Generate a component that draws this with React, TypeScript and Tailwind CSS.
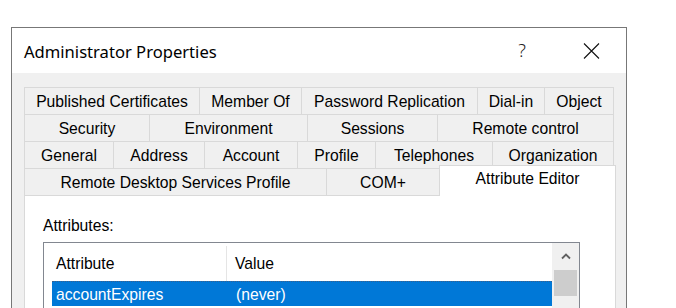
import React from "react";

const tabRows = [
  [
    { label: "Published Certificates", w: "w-[175px]" },
    { label: "Member Of", w: "w-[102px]" },
    { label: "Password Replication", w: "w-[176px]" },
    { label: "Dial-in", w: "w-[67px]" },
    { label: "Object", w: "w-[70px]" },
  ],
  [
    { label: "Security", w: "w-[125px]" },
    { label: "Environment", w: "w-[158px]" },
    { label: "Sessions", w: "w-[130px]" },
    { label: "Remote control", w: "w-[177px]" },
  ],
  [
    { label: "General", w: "w-[89px]" },
    { label: "Address", w: "w-[91px]" },
    { label: "Account", w: "w-[93px]" },
    { label: "Profile", w: "w-[78px]" },
    { label: "Telephones", w: "w-[117px]" },
    { label: "Organization", w: "w-[122px]" },
  ],
];

const font = { fontFamily: '"Liberation Sans", Arial, sans-serif' };

export default function App() {
  return (
    <div className="h-[308px] w-[676px] overflow-hidden bg-white pl-[11px] pt-[27px]" style={font}>
      <div className="w-[616px] border border-b-0 border-[#777777]">
        {/* Title bar */}
        <div className="flex h-[45px] items-center bg-white pl-[12px] pt-[3px] text-black">
          <span className="text-[16.6px]" style={{ fontFamily: '"Noto Sans", "Open Sans", sans-serif' }}>
            Administrator Properties
          </span>
          <span
            className="ml-auto mr-[57px] -mt-[3px] text-[18px] font-light text-[#222]"
            style={{ fontFamily: '"Noto Sans", sans-serif' }}
          >
            ?
          </span>
          <svg className="mr-[26px] -mt-[3px]" width="17" height="16" viewBox="0 0 17 16">
            <path d="M1 0.5 L16 15.5 M16 0.5 L1 15.5" stroke="#111" strokeWidth="1.1" fill="none" />
          </svg>
        </div>

        {/* Body */}
        <div className="bg-[#f0f0f0] pl-[12px] pt-[14px] pb-[40px]">
          <div className="w-[592px] text-[15.7px] text-black">
            {tabRows.map((row, i) => (
              <div key={i} className="flex h-[27px]">
                {row.map((t, j) => (
                  <div
                    key={t.label}
                    className={`${t.w} flex items-center justify-center border-l border-t border-[#d9d9d9] bg-[#f0f0f0] pt-px ${
                      j === row.length - 1 ? "border-r" : ""
                    }`}
                  >
                    {t.label}
                  </div>
                ))}
              </div>
            ))}
            <div className="flex h-[27px] items-end">
              <div className="flex h-[27px] w-[302px] items-center justify-center border-l border-t border-[#d9d9d9] pt-px">
                Remote Desktop Services Profile
              </div>
              <div className="flex h-[27px] w-[113px] items-center justify-center border-l border-t border-[#d9d9d9] pt-px">
                COM+
              </div>
              <div className="relative z-10 -mb-px flex h-[31px] w-[177px] items-center justify-center border-l border-r border-t border-[#d9d9d9] bg-white pb-[4px]">
                Attribute Editor
              </div>
            </div>

            {/* Panel */}
            <div className="h-[200px] w-[592px] border border-[#d9d9d9] bg-white pl-[18px] pt-[21px]">
              <div className="leading-[18px]">Attributes:</div>
              <div className="mt-[7px] flex h-[160px] w-[537px] border border-[#828790] bg-white">
                <div className="w-[508px]">
                  <div className="flex h-[38px] items-center pt-[3px]">
                    <div className="flex h-[35px] w-[183px] items-center border-r border-[#e5e5e5] pl-[12px]">
                      Attribute
                    </div>
                    <div className="pl-[8px]">Value</div>
                  </div>
                  <div className="ml-[8px] flex h-[25px] w-[500px] items-center border-t border-dotted border-[#3a5f8a] bg-[#0078d7] pt-[2px] text-white">
                    <div className="w-[184px] pl-[4px]">accountExpires</div>
                    <div>(never)</div>
                  </div>
                </div>
                <div className="flex w-[27px] flex-col items-center bg-[#f0f0f0]">
                  <div className="flex h-[27px] w-full items-center justify-center">
                    <svg width="10" height="7" viewBox="0 0 10 7">
                      <path d="M1 5.5 L5 1.5 L9 5.5" stroke="#606060" strokeWidth="1.8" fill="none" />
                    </svg>
                  </div>
                  <div className="h-[26px] w-[23px] bg-[#cdcdcd]" />
                </div>
              </div>
            </div>
          </div>
        </div>
      </div>
    </div>
  );
}
